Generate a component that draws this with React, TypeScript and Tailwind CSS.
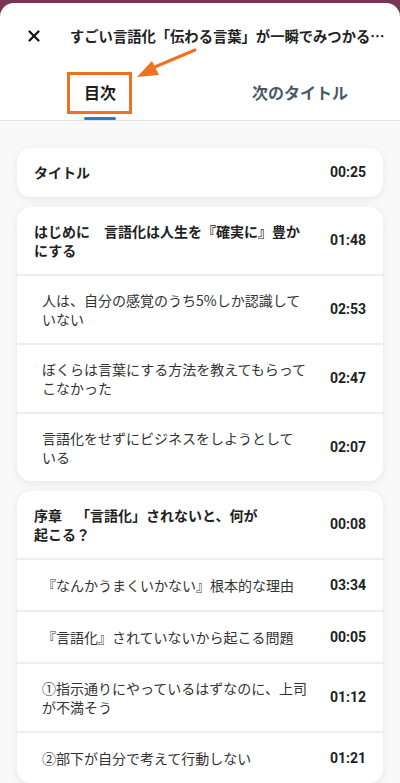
import { X } from "lucide-react";

type Row = { lines: string[]; time: string; sub?: boolean };

const groups: Row[][] = [
  [{ lines: ["タイトル"], time: "00:25" }],
  [
    { lines: ["はじめに　言語化は人生を『確実に』豊か", "にする"], time: "01:48" },
    { lines: ["人は、自分の感覚のうち5%しか認識して", "いない"], time: "02:53", sub: true },
    { lines: ["ぼくらは言葉にする方法を教えてもらって", "こなかった"], time: "02:47", sub: true },
    { lines: ["言語化をせずにビジネスをしようとして", "いる"], time: "02:07", sub: true },
  ],
  [
    { lines: ["序章　「言語化」されないと、何が", "起こる？"], time: "00:08" },
    { lines: ["『なんかうまくいかない』根本的な理由"], time: "03:34", sub: true },
    { lines: ["『言語化』されていないから起こる問題"], time: "00:05", sub: true },
    { lines: ["①指示通りにやっているはずなのに、上司", "が不満そう"], time: "01:12", sub: true },
    { lines: ["②部下が自分で考えて行動しない"], time: "01:21", sub: true },
  ],
];

const jp = { fontFamily: '"Noto Sans CJK JP", "Noto Sans", sans-serif' };
const num = { fontFamily: 'Roboto, "Liberation Sans", sans-serif' };

export default function App() {
  return (
    <div
      className="relative h-[783px] w-[400px] overflow-hidden bg-[#7a3552] [text-spacing-trim:space-all]"
      style={jp}
    >
      <div className="mt-[3px] flex h-[780px] flex-col overflow-hidden rounded-t-[14px] bg-white">
        {/* header */}
        <div className="flex h-[64px] shrink-0 items-center pl-[25px] pr-[12px] pt-[1px]">
          <X className="h-[18px] w-[18px] shrink-0 text-[#1a1a1a]" strokeWidth={3.2} />
          <div className="ml-[27px] truncate text-[14.3px] font-bold text-[#222]">
            すごい言語化「伝わる言葉」が一瞬でみつかる方法
          </div>
        </div>

        {/* tabs */}
        <div className="flex h-[54px] shrink-0 border-b border-[#e4e4e4]">
          <div className="relative flex flex-1 items-center justify-center pb-[3px]">
            <span className="text-[16px] font-bold text-[#1f1f1f]">目次</span>
            <div className="absolute bottom-0 left-[84px] h-[3px] w-[32px] rounded-full bg-[#2b7bc9]" />
          </div>
          <div className="flex flex-1 items-center justify-center pb-[3px]">
            <span className="text-[16px] font-bold text-[#4b5866]">次のタイトル</span>
          </div>
        </div>

        {/* list */}
        <div className="flex flex-1 flex-col gap-[10px] bg-[#f9f9f9] px-[17px] pt-[27px]">
          {groups.map((g, gi) => (
            <div
              key={gi}
              className="flex flex-col gap-[2px] overflow-hidden rounded-[14px] bg-[#eeeeee] shadow-[0_2px_8px_rgba(0,0,0,0.08)]"
            >
              {g.map((r, ri) => (
                <div
                  key={ri}
                  className={`flex items-center bg-white pr-[17px] ${r.sub ? "pl-[25px]" : "pl-[17px]"} ${gi === 0 ? "py-[14px]" : "py-[14.5px]"}`}
                >
                  <div
                    className={`flex-1 whitespace-nowrap text-[14px] leading-[19px] ${r.sub ? "font-normal text-[#333]" : "font-bold text-[#222]"}`}
                  >
                    {r.lines.map((l, li) => (
                      <div key={li}>{l}</div>
                    ))}
                  </div>
                  <div className="w-[54px] shrink-0 text-right text-[14px] font-bold text-[#1f1f1f]" style={num}>
                    {r.time}
                  </div>
                </div>
              ))}
            </div>
          ))}
        </div>
      </div>

      {/* annotation overlay */}
      <div className="pointer-events-none absolute left-[67px] top-[72px] h-[42px] w-[65px] border-[3px] border-[#f0711f]" />
      <svg className="pointer-events-none absolute left-0 top-0" width="400" height="130" viewBox="0 0 400 130">
        <line x1="195" y1="50" x2="150" y2="69" stroke="#f0711f" strokeWidth="3" strokeLinecap="round" />
        <polygon points="137,77 152,61 159,75" fill="#f0711f" />
      </svg>
    </div>
  );
}
